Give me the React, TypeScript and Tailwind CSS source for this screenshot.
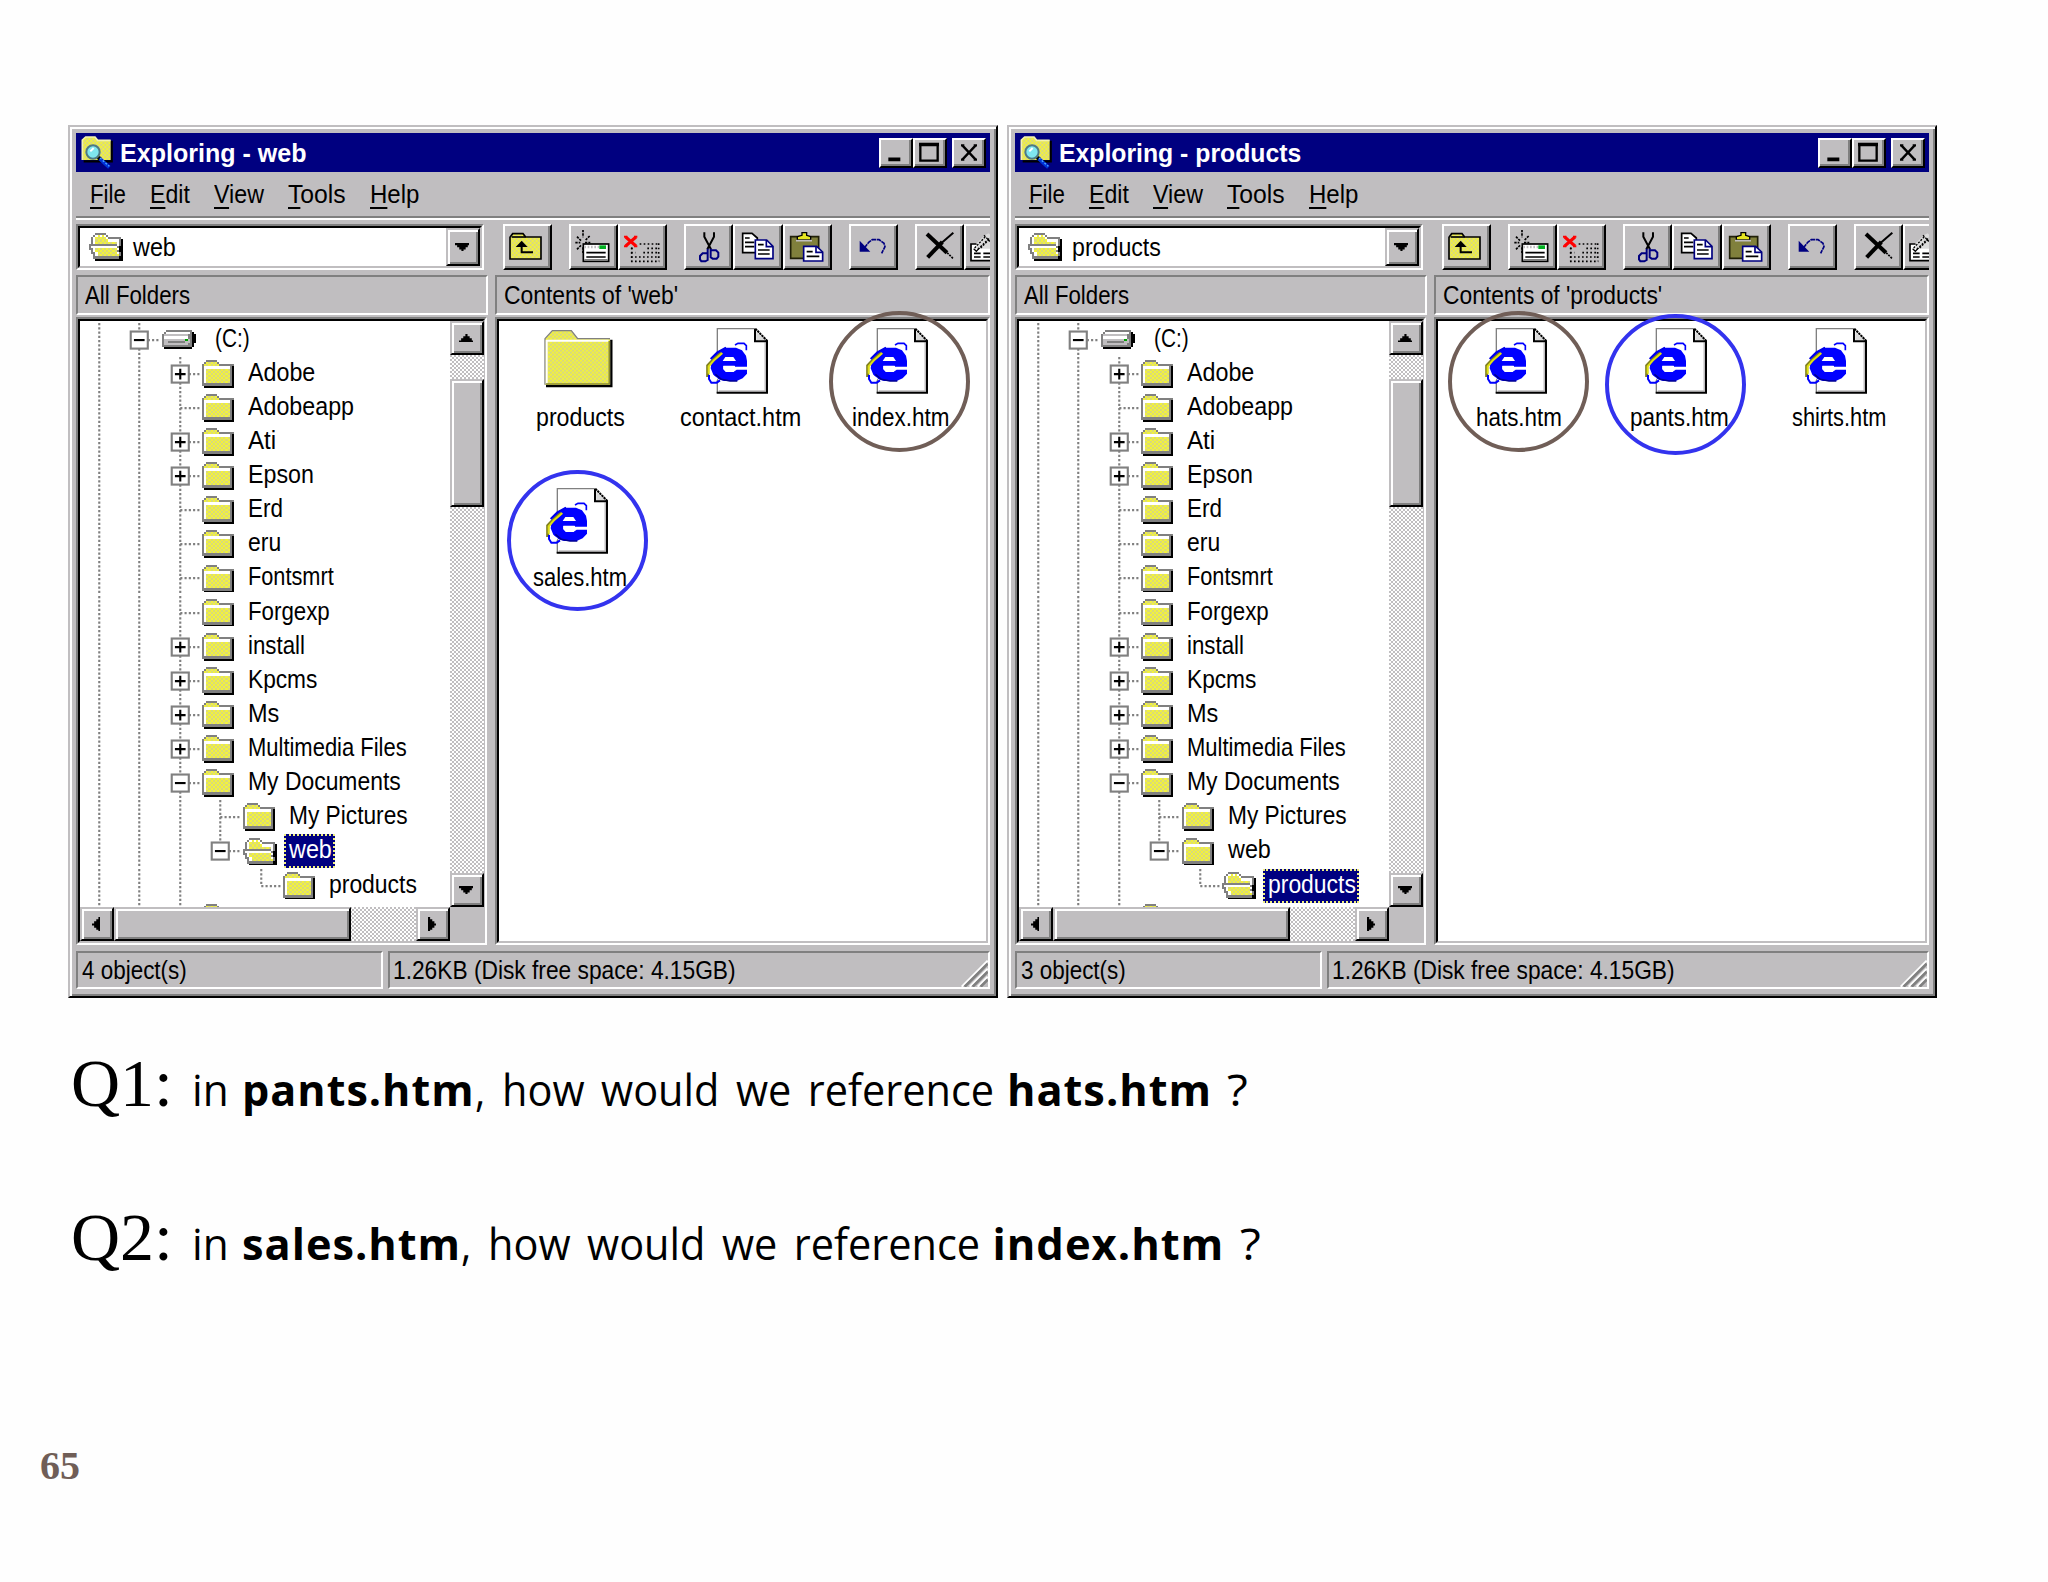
import { useLayoutEffect, useRef } from 'react';
import type { ReactNode } from 'react';
import clsx from 'clsx';

// ---------------------------------------------------------------------------
// Shared class names
// ---------------------------------------------------------------------------

const RAISED =
  'border-2 border-t-white border-l-white border-r-black border-b-black bg-[#c0bec0] shadow-[inset_-2px_-2px_0_#808080]';
const RAISED_SOFT =
  'border-2 border-t-[#c0bec0] border-l-[#c0bec0] border-r-black border-b-black bg-[#c0bec0] shadow-[inset_2px_2px_0_#fff,inset_-2px_-2px_0_#808080]';
const ETCHED = 'border-2 border-t-[#808080] border-l-[#808080] border-r-white border-b-white';
const SUNKEN =
  'border-2 border-t-[#808080] border-l-[#808080] border-r-white border-b-white bg-white';
const TRACK =
  'bg-[repeating-conic-gradient(#c0bec0_0_25%,#fff_0_50%)] bg-[length:4px_4px]';

// ---------------------------------------------------------------------------
// Label: one line of text condensed or stretched to a given width
// ---------------------------------------------------------------------------

interface LabelProps {
  width: number;
  className?: string;
  children: ReactNode;
}

function Label({ width, className, children }: LabelProps) {
  const ref = useRef<HTMLSpanElement>(null);

  useLayoutEffect(() => {
    const el = ref.current;
    if (el) el.style.transform = `scaleX(${width / el.offsetWidth})`;
  }, [width]);

  return (
    <span className={clsx('block shrink-0 whitespace-nowrap', className)} style={{ width }}>
      <span ref={ref} className="inline-block origin-left">
        {children}
      </span>
    </span>
  );
}

// ---------------------------------------------------------------------------
// Pixel art icons
// ---------------------------------------------------------------------------

const PIXEL_COLOR: Record<string, string> = {
  g: '#808080',
  w: '#ffffff',
  k: '#000000',
  s: '#c0bec0',
  n: '#00a000',
};

const FOLDER = [
  '..ggggg........',
  '.gyyyyyg.......',
  'gyyyyyyyggggggg',
  'gwwwwwwwwwwwwgk',
  'gwyyyyyyyyyyygk',
  'gwyyyyyyyyyyygk',
  'gwyyyyyyyyyyygk',
  'gwyyyyyyyyyyygk',
  'gwyyyyyyyyyyygk',
  'gwyyyyyyyyyyygk',
  'gwyyyyyyyyyyygk',
  'ggggggggggggggk',
  '.kkkkkkkkkkkkkk',
];

const FOLDER_OPEN = [
  '...ggggg........',
  '..gwywywg.......',
  '.gwyyyyywgggggg.',
  '.gwyyyyyywwwwwgk',
  '.gwyyyyyyyyyywgk',
  'gggggggggggggwgk',
  'gwwwwwwwwwwwwgkk',
  'ggwyyyyyyyyyywkk',
  '.gwyyyyyyyyyygkk',
  '.ggwyyyyyyyyywgk',
  '..gwyyyyyyyyyygk',
  '..ggggggggggggkk',
  '...kkkkkkkkkkkkk',
];

const DRIVE = [
  '..gggggggggggg..',
  '.gwwwwwwwwwwwgk.',
  'gsssssssssssggkk',
  'gwwwwwwwwwwwggkk',
  'gssssssssssnsgkk',
  'gssggggggggssgkk',
  'gsssssssssssggk.',
  'ggggggggggggggk.',
  '.kkkkkkkkkkkkk..',
];

function PixelArt({ rows }: { rows: string[] }) {
  return (
    <svg
      width={34.13}
      height={rows.length * 2.133}
      viewBox={`0 0 16 ${rows.length}`}
      shapeRendering="crispEdges"
      className="shrink-0"
    >
      {rows.flatMap((row, y) =>
        [...row].map((c, x) => {
          if (c === '.') return null;
          const yellow = (x + y) % 2 ? '#f2f23c' : '#dada78';
          return (
            <rect
              key={`${x}-${y}`}
              x={x}
              y={y}
              width={1.02}
              height={1.02}
              fill={c === 'y' ? yellow : PIXEL_COLOR[c]}
            />
          );
        }),
      )}
    </svg>
  );
}

// Yellow checker fill used by the larger folder drawings
function DitherDefs() {
  return (
    <svg width="0" height="0" className="absolute">
      <defs>
        <pattern id="dither" width="12" height="12" patternUnits="userSpaceOnUse">
          <rect width="12" height="12" fill="#f2f23c" />
          <rect width="6" height="6" fill="#d8d880" />
          <rect x="6" y="6" width="6" height="6" fill="#d8d880" />
        </pattern>
      </defs>
    </svg>
  );
}

function ExplorerIcon() {
  return (
    <svg width="32" height="33" viewBox="62 48 96 99" className="shrink-0">
      <path d="M70 124H154V62" fill="none" stroke="#000" strokeWidth="7" />
      <path d="M66 120V60L76 51H104L112 61H151V120Z" fill="url(#dither)" />
      <path d="M66 120V60L76 51H104L112 61H151" fill="none" stroke="#f4f4b0" strokeWidth="5" />
      <circle cx="98" cy="96" r="20" fill="#7fe6ee" stroke="#4f7a84" strokeWidth="6" />
      <path d="M90 94L100 84" stroke="#fff" strokeWidth="6" />
      <path d="M114 112L120 118" stroke="#000" strokeWidth="12" />
      <path d="M118 116L147 142" stroke="#0032d8" strokeWidth="11" />
      <path d="M119 114L147 139" stroke="#49a8ff" strokeWidth="4" strokeDasharray="6 5" />
    </svg>
  );
}

function BigFolder() {
  return (
    <svg width="68" height="66" viewBox="168 625 204 198" overflow="visible">
      <path d="M168 799H364V660" fill="none" stroke="#000" strokeWidth="7" />
      <path d="M165 795V657L187 633H244L263 657H360V795Z" fill="url(#dither)" />
      <path d="M165 795V657L187 633H244L263 657H360" fill="none" stroke="#808080" strokeWidth="4" />
      <path d="M170 792V663H356" fill="none" stroke="#fff" strokeWidth="6" />
      <path d="M168 793H358V664" fill="none" stroke="#8c8c30" strokeWidth="5" />
    </svg>
  );
}

function HtmlPage() {
  return (
    <svg width="68" height="66" viewBox="648 625 204 198" overflow="visible">
      <path d="M682 819V627H796L832 664V819Z" fill="#fff" />
      <path d="M682 819V627H796" fill="none" stroke="#808080" strokeWidth="4" />
      <path d="M686 814H826V668" fill="none" stroke="#c0bec0" strokeWidth="5" />
      <path d="M680 819H831V665H795V628" fill="none" stroke="#000" strokeWidth="6" />
      <path d="M799 636L825 661H799Z" fill="#d8d8d8" />
      <path d="M796 627L832 664" stroke="#000" strokeWidth="6" strokeDasharray="7 2" />
      {/* the letter's body */}
      <path
        d="M704 684H738L756 692L768 708L771 724V742H734V738H700V748L708 757H730L740 750H771V762L758 776L740 784H702L684 778L670 765L662 746L666 718L684 696Z"
        fill="#0000ff"
      />
      <path d="M676 764L694 779L720 784H742" fill="none" stroke="#000090" strokeWidth="5" />
      <path d="M698 724L706 712H730L738 724Z" fill="#fff" />
      <path d="M700 739H735V741H771V748H739L730 757H708L700 749Z" fill="#fff" />
      {/* ring around the letter */}
      <path d="M653 772V738L668 722L694 700" fill="none" stroke="#808020" strokeWidth="9" />
      <path d="M656 762V740L672 722L697 700" fill="none" stroke="#e0e010" strokeWidth="6" />
      <path d="M662 718L682 698L708 684" fill="none" stroke="#0000e8" strokeWidth="6" />
      <path d="M735 676L744 671H762L769 678V692" fill="none" stroke="#0000ff" strokeWidth="5" />
      <path d="M657 766V778L664 789H680L690 782" fill="none" stroke="#0000ff" strokeWidth="6" />
      <path d="M664 764L668 782H680L684 776Z" fill="#fff" />
    </svg>
  );
}

// ---------------------------------------------------------------------------
// Toolbar
// ---------------------------------------------------------------------------

function UpIcon() {
  return (
    <>
      <path d="M61 417V352L69 341H100L108 351H154V417Z" fill="url(#dither)" stroke="#000" strokeWidth="5" />
      <path d="M66 351H108" stroke="#000" strokeWidth="5" />
      <path d="M130 397H96V370" fill="none" stroke="#000" strokeWidth="6" />
      <path d="M78 381L96 362L114 381Z" fill="#000" />
    </>
  );
}

function MapDriveIcon() {
  return (
    <>
      <path
        d="M280 330V352M280 382V400M257 368H272M286 368H302M262 350L274 362M300 348L286 362M262 388L274 376"
        stroke="#000"
        strokeWidth="5"
        strokeDasharray="7 3"
      />
      <rect x="281" y="372" width="76" height="52" fill="#fff" stroke="#000" strokeWidth="5" />
      <path d="M284 381H328" stroke="#c0bec0" strokeWidth="8" strokeDasharray="5 5" />
      <rect x="329" y="376" width="20" height="11" fill="#00b020" />
      <path d="M290 398H348M290 411H348" stroke="#000" strokeWidth="5" />
      <path d="M284 419H354" stroke="#808080" strokeWidth="4" />
    </>
  );
}

function UnmapDriveIcon() {
  return (
    <>
      <path d="M409 351L440 378M440 351L409 378" stroke="#ff0000" strokeWidth="9" />
      <path d="M404 350H414M434 350H444M404 379H414M434 379H444" stroke="#ff0000" strokeWidth="6" />
      <path
        d="M451 372H510M425 385H432M474 385H510M425 398H438M462 398H510M425 411H510M425 424H510"
        stroke="#000"
        strokeWidth="5"
        strokeDasharray="5 7"
      />
      <path d="M427 383V424M508 370V424" stroke="#000" strokeWidth="5" strokeDasharray="5 8" />
    </>
  );
}

function CutIcon() {
  return (
    <>
      <path d="M645 337V350L665 388M674 337V350L654 388" fill="none" stroke="#000" strokeWidth="6" />
      <path
        d="M655 386V420L648 424H636L632 418V408L640 400H655M664 386V412L670 416H682L687 410V398L680 391H664"
        fill="none"
        stroke="#000080"
        strokeWidth="6"
      />
    </>
  );
}

function CopyIcon() {
  return (
    <>
      <path d="M761 340H789L805 354V398H761Z" fill="#fff" stroke="#000" strokeWidth="5" />
      <path d="M768 354H782M768 367H796M768 380H796" stroke="#000" strokeWidth="5" />
      <path d="M799 360H833L852 379V416H799Z" fill="#fff" stroke="#000080" strokeWidth="5" />
      <path d="M832 360V380H852" fill="none" stroke="#000080" strokeWidth="5" />
      <path d="M807 374H824M807 390H842M807 402H842" stroke="#000" strokeWidth="5" />
    </>
  );
}

function PasteIcon() {
  return (
    <>
      <path d="M902 350H986V415H902Z" fill="#80803c" stroke="#202008" strokeWidth="5" />
      <path d="M922 360V350L936 346V338H950V346L962 350V360Z" fill="#e6e620" stroke="#000" strokeWidth="4" />
      <path d="M918 362H966" stroke="#c0bec0" strokeWidth="5" />
      <path d="M941 379H980L998 396V423H941Z" fill="#fff" stroke="#000080" strokeWidth="5" />
      <path d="M978 380V397H998" fill="none" stroke="#000080" strokeWidth="5" />
      <path d="M950 395H968M950 409H988" stroke="#000" strokeWidth="5" />
    </>
  );
}

function UndoIcon() {
  return (
    <>
      <path d="M1110 362V395H1142Z" fill="#000080" />
      <path
        d="M1124 384L1138 366L1148 359H1168L1183 370L1186 380L1176 400"
        fill="none"
        stroke="#000080"
        strokeWidth="5"
        strokeDasharray="14 2"
      />
    </>
  );
}

function DeleteIcon() {
  return (
    <>
      <path d="M1312 342L1372 398" stroke="#000" strokeWidth="12" />
      <path d="M1366 392L1391 416" stroke="#000" strokeWidth="5" strokeDasharray="6 3" />
      <path d="M1391 338L1352 372" stroke="#000" strokeWidth="6" />
      <path d="M1358 366L1314 412" stroke="#000" strokeWidth="12" />
    </>
  );
}

function PropertiesIcon() {
  return (
    <>
      <path d="M1445 422V372H1516V422Z" fill="#fff" stroke="#000" strokeWidth="5" />
      <path d="M1462 386V370L1486 346L1498 340L1516 356V386Z" fill="#dcdcdc" />
      <path
        d="M1456 384L1490 348M1466 388L1500 354M1484 346L1504 366M1474 384L1506 352"
        stroke="#000"
        strokeWidth="4"
        strokeDasharray="6 4"
      />
      <path d="M1453 386L1461 394L1470 384" fill="none" stroke="#000" strokeWidth="4" />
      <path d="M1454 400H1474M1482 400H1510M1454 411H1474M1482 411H1510" stroke="#000" strokeWidth="5" />
    </>
  );
}

interface Tool {
  name: string;
  origin: number;
  gap: boolean;
  icon: ReactNode;
}

// origin is the left edge of the button in the icons' drawing space
const TOOLS: Tool[] = [
  { name: 'Up One Level', origin: 40, gap: false, icon: <UpIcon /> },
  { name: 'Map Network Drive', origin: 238, gap: true, icon: <MapDriveIcon /> },
  { name: 'Disconnect Drive', origin: 386, gap: false, icon: <UnmapDriveIcon /> },
  { name: 'Cut', origin: 584, gap: true, icon: <CutIcon /> },
  { name: 'Copy', origin: 732, gap: false, icon: <CopyIcon /> },
  { name: 'Paste', origin: 879, gap: false, icon: <PasteIcon /> },
  { name: 'Undo', origin: 1078, gap: true, icon: <UndoIcon /> },
  { name: 'Delete', origin: 1276, gap: true, icon: <DeleteIcon /> },
  { name: 'Properties', origin: 1424, gap: false, icon: <PropertiesIcon /> },
];

function Toolbar({ location, width }: { location: string; width: number }) {
  return (
    <div className="mt-1 flex h-[46px] overflow-hidden">
      <div className={clsx(SUNKEN, 'mr-[19px] w-[408px] shrink-0')}>
        <div className="flex h-full items-center border-t-2 border-r-2 border-b-2 border-l-2 border-t-black border-r-[#c0bec0] border-b-[#c0bec0] border-l-black pl-[9px]">
          <PixelArt rows={FOLDER_OPEN} />
          <Label width={width} className="ml-2.5">
            {location}
          </Label>
          <div className={clsx(RAISED_SOFT, 'ml-auto flex h-full w-[34px] items-center justify-center')}>
            <Arrow dir="down" />
          </div>
        </div>
      </div>
      {TOOLS.map((tool) => (
        <button
          key={tool.name}
          type="button"
          aria-label={tool.name}
          className={clsx(RAISED, 'h-[46px] w-[49.2px] shrink-0', tool.gap && 'ml-[16.8px]')}
        >
          <svg
            className="-mt-0.5 -ml-0.5"
            width="49.2"
            height="46"
            viewBox={`${tool.origin} 312 147.6 138`}
            overflow="visible"
          >
            {tool.icon}
          </svg>
        </button>
      ))}
    </div>
  );
}

// ---------------------------------------------------------------------------
// Scroll bars
// ---------------------------------------------------------------------------

const ARROWS = {
  up: 'M3 0h1v1h1v1h1v1h1v1H0V3h1V2h1V1h1z',
  down: 'M0 0h7v1H6v1H5v1H4v1H3V3H2V2H1V1H0z',
  left: 'M4 0v7H3V6H2V5H1V4H0V3h1V2h1V1h1V0z',
  right: 'M0 0h1v1h1v1h1v1h1v1H3v1H2v1H1v1H0z',
};

function Arrow({ dir }: { dir: keyof typeof ARROWS }) {
  const vertical = dir === 'up' || dir === 'down';
  const w = vertical ? 7 : 4;
  const h = vertical ? 4 : 7;
  return (
    <svg width={w * 2.133} height={h * 2.133} viewBox={`0 0 ${w} ${h}`} className="mr-[2px]">
      <path d={ARROWS[dir]} />
    </svg>
  );
}

function ScrollButton({ dir }: { dir: keyof typeof ARROWS }) {
  return (
    <div className={clsx(RAISED_SOFT, 'flex h-[34px] w-[34px] shrink-0 items-center justify-center')}>
      <Arrow dir={dir} />
    </div>
  );
}

// ---------------------------------------------------------------------------
// Folder tree
// ---------------------------------------------------------------------------

interface TreeNode {
  // one character per column: | line, T branch, L last branch,
  // + collapsed, - expanded, _ expanded and last
  guides: string;
  name: string;
  width: number;
  drive?: boolean;
}

const TREE: TreeNode[] = [
  { guides: '|-', name: '(C:)', width: 35, drive: true },
  { guides: '||+', name: 'Adobe', width: 67 },
  { guides: '||T', name: 'Adobeapp', width: 106 },
  { guides: '||+', name: 'Ati', width: 28 },
  { guides: '||+', name: 'Epson', width: 66 },
  { guides: '||T', name: 'Erd', width: 35 },
  { guides: '||T', name: 'eru', width: 33 },
  { guides: '||T', name: 'Fontsmrt', width: 86 },
  { guides: '||T', name: 'Forgexp', width: 82 },
  { guides: '||+', name: 'install', width: 57 },
  { guides: '||+', name: 'Kpcms', width: 69 },
  { guides: '||+', name: 'Ms', width: 31 },
  { guides: '||+', name: 'Multimedia Files', width: 159 },
  { guides: '||-', name: 'My Documents', width: 153 },
  { guides: '|||T', name: 'My Pictures', width: 119 },
  { guides: '|||_', name: 'web', width: 43 },
  { guides: '||| L', name: 'products', width: 88 },
];

function Guide({ kind }: { kind: string }) {
  const boxed = kind === '+' || kind === '-' || kind === '_';
  const down = kind === '|' || kind === 'T' || kind === '+' || kind === '-';
  return (
    <svg width="40.53" height="34.13" viewBox="0 0 19 16" className="shrink-0">
      {kind !== ' ' && (
        <path
          d={`M9.5 0V${down ? 16 : 8}${kind === '|' ? '' : 'M9.5 8H20'}`}
          stroke="#808080"
          strokeWidth="1"
          strokeDasharray="1 1"
        />
      )}
      {boxed && (
        <>
          <rect x="5.5" y="4" width="8" height="8" fill="#fff" stroke="#808080" />
          <path d={kind === '+' ? 'M7 8H12M9.5 5.5V10.5' : 'M7 8H12'} stroke="#000" />
        </>
      )}
    </svg>
  );
}

function TreeRow({ node, selected }: { node: TreeNode; selected: boolean }) {
  let rows = FOLDER;
  if (selected) rows = FOLDER_OPEN;
  if (node.drive) rows = DRIVE;

  return (
    <div className="flex h-[34.133px] items-center">
      {[...node.guides].map((kind, i) => (
        <Guide key={i} kind={kind} />
      ))}
      <div className="ml-0.5 flex w-[41px] shrink-0">
        <PixelArt rows={rows} />
      </div>
      <div
        className={clsx(
          'h-[34px] border-2 pr-[1px] pl-[3px]',
          node.drive && 'ml-[7px]',
          selected ? 'border-dotted border-[#f0f080] bg-[#000080] text-white' : 'border-transparent',
        )}
      >
        <Label width={node.width} className="-mt-0.5">
          {node.name}
        </Label>
      </div>
    </div>
  );
}

function FolderTree({ selected }: { selected: string }) {
  return (
    <div className={clsx(SUNKEN, 'w-[411px] shrink-0')}>
      <div className="flex h-full flex-col border-2 border-t-black border-r-[#c0bec0] border-b-[#c0bec0] border-l-black">
        <div className="flex h-[586px]">
          <div className="w-[370px] shrink-0 overflow-hidden">
            <div className="-ml-[1.5px] pt-[1.5px]">
              {TREE.map((node) => (
                <TreeRow key={node.name} node={node} selected={node.name === selected} />
              ))}
              {/* next folder, cut off by the scroll bar */}
              <div className="flex h-[34px]">
                <Guide kind="|" />
                <Guide kind="|" />
                <Guide kind="|" />
                <div className="ml-0.5 pt-px">
                  <PixelArt rows={FOLDER} />
                </div>
              </div>
            </div>
          </div>
          <div className={clsx(TRACK, 'flex w-[34px] flex-col')}>
            <ScrollButton dir="up" />
            <div className={clsx(RAISED_SOFT, 'mt-6 h-[128px]')} />
            <div className="mt-auto">
              <ScrollButton dir="down" />
            </div>
          </div>
        </div>
        <div className="flex h-[34px] bg-[#c0bec0]">
          <div className={clsx(TRACK, 'flex w-[370px]')}>
            <ScrollButton dir="left" />
            <div className={clsx(RAISED_SOFT, 'w-[237px]')} />
            <div className="ml-auto">
              <ScrollButton dir="right" />
            </div>
          </div>
        </div>
      </div>
    </div>
  );
}

// ---------------------------------------------------------------------------
// Folder contents
// ---------------------------------------------------------------------------

interface Item {
  name: string;
  width: number;
  folder?: boolean;
  mark?: string;
}

function ContentItem({ item }: { item: Item }) {
  return (
    <div className="relative flex h-[160px] w-[160px] flex-col items-center pt-[7px]">
      {item.folder ? <BigFolder /> : <HtmlPage />}
      <Label width={item.width} className="mt-[8px]">
        {item.name}
      </Label>
      {item.mark && (
        <div className={clsx('absolute h-[141px] w-[141px] rounded-full border-4', item.mark)} />
      )}
    </div>
  );
}

// ---------------------------------------------------------------------------
// Window
// ---------------------------------------------------------------------------

const MENUS = [
  { name: 'File', width: 36 },
  { name: 'Edit', width: 40 },
  { name: 'View', width: 50 },
  { name: 'Tools', width: 58 },
  { name: 'Help', width: 49 },
];

interface ExplorerProps {
  location: string;
  locationWidth: number;
  titleWidth: number;
  headingWidth: number;
  count: number;
  items: Item[];
}

function CaptionButton({ d, className }: { d: string; className?: string }) {
  return (
    <div className={clsx(RAISED, 'h-[30px] w-[34px]', className)}>
      <svg width="30" height="26" viewBox="0 0 90 78">
        <path d={d} fill="none" stroke="#000" strokeWidth="7" />
      </svg>
    </div>
  );
}

function Explorer(props: ExplorerProps) {
  const { location, locationWidth, titleWidth, headingWidth, count, items } = props;

  return (
    <section className="h-[873px] w-[930px] border-2 border-t-[#c0bec0] border-r-black border-b-black border-l-[#c0bec0] bg-[#c0bec0] px-1.5 pt-1.5 shadow-[inset_2px_2px_0_#fff,inset_-2px_-2px_0_#808080]">
      <div className="flex h-[39px] items-center bg-[#000080] pr-1 pl-[5px]">
        <ExplorerIcon />
        <Label width={titleWidth} className="ml-[7px] text-[26px] font-bold text-white">
          Exploring - {location}
        </Label>
        <CaptionButton d="M22 56H58M22 60H58" className="ml-auto" />
        <CaptionButton d="M16 10V62H68V10M12 12H72M12 15H72" />
        <CaptionButton d="M25 16L65 59M65 16L25 59M21 16H31M59 16H69M21 59H31M59 59H69" className="ml-[5px]" />
      </div>

      <div className="flex h-[44px] items-center gap-6 pb-px pl-[13.5px]">
        {MENUS.map((menu) => (
          <Label key={menu.name} width={menu.width} className="text-[26px]">
            <span className="underline decoration-2 underline-offset-4">{menu.name[0]}</span>
            {menu.name.slice(1)}
          </Label>
        ))}
      </div>
      <div className="h-1 border-t-2 border-b-2 border-t-[#808080] border-b-white" />

      <Toolbar location={location} width={locationWidth} />

      <div className="mt-[5px] flex h-10 gap-[7px]">
        <div className={clsx(ETCHED, 'flex w-[412px] items-center pl-[7px]')}>
          <Label width={105}>All Folders</Label>
        </div>
        <div className={clsx(ETCHED, 'flex flex-1 items-center pl-[7px]')}>
          <Label width={headingWidth}>Contents of &apos;{location}&apos;</Label>
        </div>
      </div>

      <div className="mt-0.5 flex h-[628px] gap-2">
        <FolderTree selected={location} />
        <div className={clsx(SUNKEN, 'flex-1')}>
          <div className="grid h-full grid-cols-[160px_160px_160px] content-start border-2 border-t-black border-r-[#c0bec0] border-b-[#c0bec0] border-l-black pl-px">
            {items.map((item) => (
              <ContentItem key={item.name} item={item} />
            ))}
          </div>
        </div>
      </div>

      <div className="mt-1.5 flex h-[38px] gap-[5px]">
        <div className={clsx(ETCHED, 'flex w-[307px] items-center pl-1')}>
          <Label width={105}>{count} object(s)</Label>
        </div>
        <div className={clsx(ETCHED, 'flex flex-1 items-center justify-between pl-[3px]')}>
          <Label width={343}>1.26KB (Disk free space: 4.15GB)</Label>
          <svg width="27" height="27" viewBox="0 0 81 81" className="self-end">
            <path d="M2 80L80 2M26 80L80 26M50 80L80 50" stroke="#fff" strokeWidth="6" />
            <path d="M11 80L80 11M35 80L80 35M59 80L80 59" stroke="#808080" strokeWidth="8" />
          </svg>
        </div>
      </div>
    </section>
  );
}

// ---------------------------------------------------------------------------
// Questions
// ---------------------------------------------------------------------------

interface QuestionProps {
  label: string;
  from: string;
  fromWidth: number;
  to: string;
  toWidth: number;
}

function Question({ label, from, fromWidth, to, toWidth }: QuestionProps) {
  return (
    <p className="flex h-[80px] items-baseline font-['Open_Sans',sans-serif] text-[43.5px] leading-[80px]">
      <Label width={102.5} className="font-['Liberation_Serif',serif] text-[67px]">
        {label}
      </Label>
      <Label width={37} className="ml-[18px]">
        in
      </Label>
      <Label width={fromWidth} className="ml-[13px] font-bold tracking-[1px]">
        {from}
      </Label>
      <Label width={10}>,</Label>
      <Label width={492} className="ml-[17px] [word-spacing:6px]">
        how would we reference
      </Label>
      <Label width={toWidth} className="ml-[13px] font-bold tracking-[1px]">
        {to}
      </Label>
      <Label width={21} className="ml-[15px]">
        ?
      </Label>
    </p>
  );
}

// ---------------------------------------------------------------------------
// Slide
// ---------------------------------------------------------------------------

const BROWN = 'border-[#705e57]';
const BLUE = 'border-[#3333ee]';

export default function App() {
  return (
    <main className="h-[1582px] w-[2048px] overflow-hidden bg-[#fefefe] font-['Liberation_Sans',Arial,sans-serif] text-[25px] leading-[30px] text-black">
      <DitherDefs />
      <div className="flex gap-[9px] pt-[125px] pl-[68px]">
        <Explorer
          location="web"
          locationWidth={43}
          titleWidth={187}
          headingWidth={174}
          count={4}
          items={[
            { name: 'products', width: 89, folder: true },
            { name: 'contact.htm', width: 121 },
            { name: 'index.htm', width: 97, mark: `${BROWN} top-[-10px] left-[9px]` },
            { name: 'sales.htm', width: 94, mark: `${BLUE} top-[-11px] left-[7px]` },
          ]}
        />
        <Explorer
          location="products"
          locationWidth={89}
          titleWidth={242}
          headingWidth={219}
          count={3}
          items={[
            { name: 'hats.htm', width: 86, mark: `${BROWN} top-[-10px] left-[9px]` },
            { name: 'pants.htm', width: 99, mark: `${BLUE} top-[-7px] left-[6px]` },
            { name: 'shirts.htm', width: 94 },
          ]}
        />
      </div>

      <div className="mt-[45px] flex flex-col gap-[73.5px] pl-[71px]">
        <Question label="Q1:" from="pants.htm" fromWidth={233} to="hats.htm" toWidth={205} />
        <Question label="Q2:" from="sales.htm" fromWidth={219} to="index.htm" toWidth={232} />
      </div>

      <div className="mt-[166px] pl-[39.5px]">
        <Label width={40} className="font-['Liberation_Serif',serif] text-[41px] leading-[44px] font-bold text-[#705e57]">
          65
        </Label>
      </div>
    </main>
  );
}
